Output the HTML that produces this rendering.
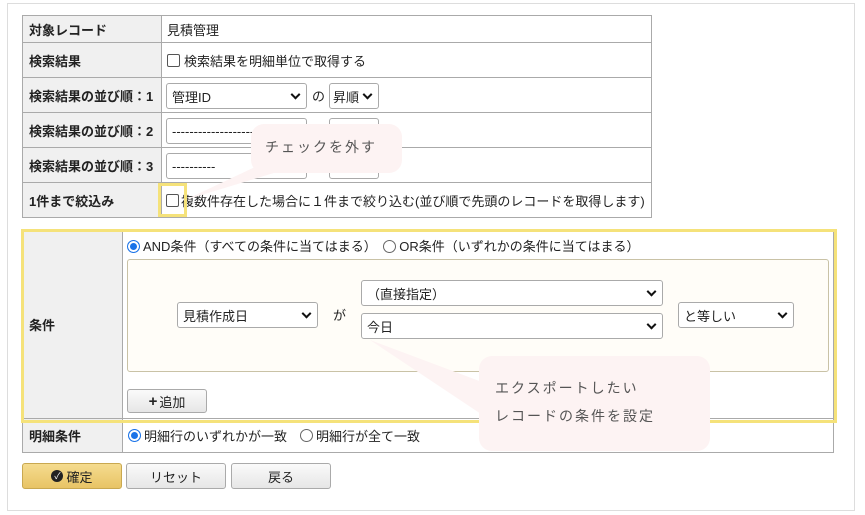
<!DOCTYPE html>
<html><head><meta charset="utf-8"><style>
*{box-sizing:border-box;margin:0;padding:0}
body{width:865px;height:515px;background:#fff;position:relative;overflow:hidden;font-family:"Liberation Sans","Noto Sans CJK JP",sans-serif;font-size:13px;color:#222}
.a{position:absolute}
.lab{background:#f0f0f0;font-weight:bold;border:1px solid #aaa;padding-left:6px;display:flex;align-items:center}
.val{border:1px solid #aaa;display:flex;align-items:center;padding-left:5px;background:#fff}
.sel{position:absolute;border:1px solid #aaa;border-radius:3px;background:#fff;padding-left:5px;display:flex;align-items:center;font-size:13px}
.sel:after{content:"";position:absolute;right:7px;top:50%;width:5px;height:5px;border-right:2px solid #111;border-bottom:2px solid #111;transform:translateY(-70%) rotate(45deg)}
.cb{display:inline-block;width:13px;height:13px;border:1px solid #555;border-radius:2px;margin-right:4px;background:#fff}
.rd{display:inline-block;width:13px;height:13px;border:1px solid #666;border-radius:50%;margin-right:3px;vertical-align:-2px;background:#fff}
.rd.on{border:1px solid #1a73e8;box-shadow:inset 0 0 0 2px #fff;background:#1a73e8}
.btn{position:absolute;border:1px solid #aaa;border-radius:3px;background:linear-gradient(#fafafa,#e6e6e6);display:flex;align-items:center;justify-content:center}
.call{position:absolute;background:#fdf3f3;border-radius:13px;color:#555;letter-spacing:2px;font-size:14px}
</style></head><body>
<div class="a" style="left:7px;top:3px;width:848px;height:508px;border:1px solid #ddd"></div>

<div class="a lab" style="left:22px;top:15px;width:140px;height:28px">対象レコード</div>
<div class="a val" style="left:161px;top:15px;width:491px;height:28px">見積管理</div>
<div class="a lab" style="left:22px;top:42px;width:140px;height:36px">検索結果</div>
<div class="a val" style="left:161px;top:42px;width:491px;height:36px"><span class="cb"></span>検索結果を明細単位で取得する</div>
<div class="a lab" style="left:22px;top:77px;width:140px;height:36px">検索結果の並び順：1</div>
<div class="a val" style="left:161px;top:77px;width:491px;height:36px"></div>
<div class="a lab" style="left:22px;top:112px;width:140px;height:36px">検索結果の並び順：2</div>
<div class="a val" style="left:161px;top:112px;width:491px;height:36px"></div>
<div class="a lab" style="left:22px;top:147px;width:140px;height:36px">検索結果の並び順：3</div>
<div class="a val" style="left:161px;top:147px;width:491px;height:36px"></div>
<div class="a lab" style="left:22px;top:182px;width:140px;height:36px">1件まで絞込み</div>
<div class="a val" style="left:161px;top:182px;width:491px;height:36px;padding-left:4px"><span class="cb" style="margin-right:2px"></span>複数件存在した場合に１件まで絞り込む(並び順で先頭のレコードを取得します)</div>

<div class="sel" style="left:166px;top:83px;width:141px;height:26px">管理ID</div>
<div class="a" style="left:312px;top:86px">の</div>
<div class="sel" style="left:329px;top:83px;width:50px;height:26px;padding-left:3px">昇順</div>
<div class="sel" style="left:166px;top:118px;width:141px;height:26px">-------------------</div>
<div class="sel" style="left:329px;top:118px;width:50px;height:26px"></div>
<div class="sel" style="left:166px;top:153px;width:141px;height:26px">----------</div>
<div class="sel" style="left:329px;top:153px;width:50px;height:26px"></div>

<div class="a" style="left:158px;top:183px;width:29px;height:34px;border:3px solid #f5e27a"></div>

<div class="a lab" style="left:22px;top:230px;width:101px;height:189px">条件</div>
<div class="a val" style="left:122px;top:230px;width:712px;height:189px"></div>
<div class="a lab" style="left:22px;top:418px;width:101px;height:35px">明細条件</div>
<div class="a val" style="left:122px;top:418px;width:712px;height:35px"><span class="rd on"></span>明細行のいずれかが一致　<span class="rd"></span>明細行が全て一致</div>
<div class="a" style="left:127px;top:236px"><span class="rd on"></span>AND条件（すべての条件に当てはまる）　<span class="rd"></span>OR条件（いずれかの条件に当てはまる）</div>
<div class="a" style="left:127px;top:259px;width:702px;height:113px;background:#fffdf8;border:1px solid #c9c2a6;border-radius:3px"></div>
<div class="sel" style="left:177px;top:302px;width:141px;height:26px">見積作成日</div>
<div class="a" style="left:333px;top:305px">が</div>
<div class="sel" style="left:361px;top:280px;width:302px;height:26px">（直接指定）</div>
<div class="sel" style="left:361px;top:313px;width:302px;height:26px">今日</div>
<div class="sel" style="left:678px;top:302px;width:116px;height:26px">と等しい</div>
<div class="btn" style="left:127px;top:389px;width:80px;height:24px"><b style="font-size:15px;margin-right:2px">+</b>追加</div>
<div class="a" style="left:21px;top:229px;width:816px;height:194px;border:3px solid #f5e27a"></div>

<div class="btn" style="left:22px;top:463px;width:100px;height:26px;background:linear-gradient(#f5dc8f,#e8c465);border-color:#c9a850"><span style="display:inline-block;width:12px;height:12px;border-radius:50%;background:#222;color:#fff;font-size:9px;line-height:12px;text-align:center;margin-right:3px">✓</span>確定</div>
<div class="btn" style="left:126px;top:463px;width:100px;height:26px">リセット</div>
<div class="btn" style="left:231px;top:463px;width:100px;height:26px">戻る</div>

<svg class="a" style="left:0;top:0" width="865" height="515"><polygon points="185,200 270,160 300,165" fill="#fdf3f3"/><polygon points="370,340 490,385 490,420" fill="#fdf3f3"/></svg>
<div class="call" style="left:251px;top:124px;width:151px;height:49px;padding:13px 0 0 14px">チェックを外す</div>
<div class="call" style="left:479px;top:356px;width:231px;height:95px;padding:18px 0 0 16px;line-height:28px">エクスポートしたい<br>レコードの条件を設定</div>
</body></html>
